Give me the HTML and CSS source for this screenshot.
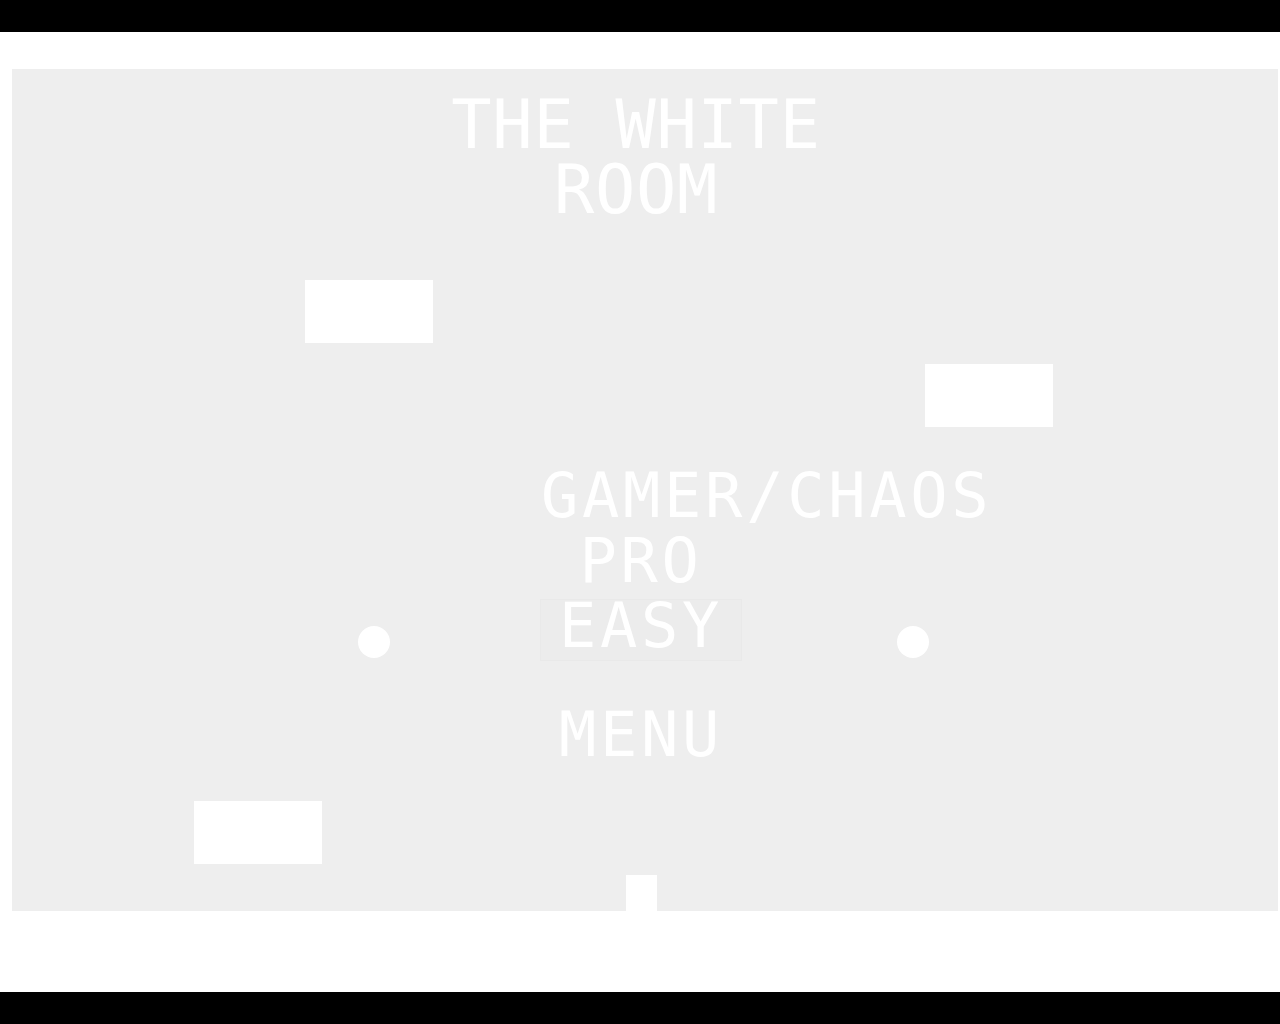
FILE: index.html
```html
<!DOCTYPE html>
<html lang="en">
<head>
    <meta charset="UTF-8">
    <meta name="viewport" content="width=device-width, initial-scale=1.0">
    <title>The White Room</title>
    <link rel="stylesheet" href="styles.css">
</head>
<body>
    <div class="bar"></div>

    <div class="screen">
        <div class="room">
            <h1 class="title">THE WHITE<br>ROOM</h1>

            <!-- Difficulty picker -->
            <div class="menu">
                <div class="item">GAMER/CHAOS</div>
                <div class="item">PRO</div>
                <div class="item selected">EASY</div>
                <div class="item back">MENU</div>
            </div>

            <!-- Floating blocks and orbs of the room -->
            <div class="block" style="left: 293px; top: 211px;"></div>
            <div class="block" style="left: 913px; top: 295px;"></div>
            <div class="block" style="left: 182px; top: 732px;"></div>
            <div class="orb" style="left: 346px; top: 557px;"></div>
            <div class="orb" style="left: 885px; top: 557px;"></div>
            <div class="player"></div>
        </div>
    </div>

    <div class="bar"></div>
</body>
</html>
```

FILE: styles.css
```css
* {
    margin: 0;
    padding: 0;
    box-sizing: border-box;
}

body {
    background-color: #fff;
    font-family: "DejaVu Sans Mono", "Liberation Mono", monospace;
    color: #fff;
}

.bar {
    height: 32px;
    background-color: #000;
}

.screen {
    height: 960px;
    padding: 37px 2px 0 12px;
    background-color: #fff;
}

.room {
    position: relative;
    width: 1266px;
    height: 842px;
    background-color: #eeeeee;
    overflow: hidden;
    padding-top: 24px;
}

.title {
    width: 400px;
    margin-left: 424px;
    font-size: 67px;
    font-weight: normal;
    line-height: 65px;
    letter-spacing: 0.7px;
    text-align: center;
}

.menu {
    width: 200px;
    margin: 247px 0 0 529px;
    display: flex;
    flex-direction: column;
    gap: 5px;
}

.item {
    height: 60px;
    padding-bottom: 8px;
    font-size: 62px;
    line-height: 52px;
    letter-spacing: 3.7px;
    text-align: center;
    white-space: nowrap;
}

.selected {
    background-color: #ececec;
    box-shadow: 0 0 0 1px #e9e9e9;
}

.back {
    margin-top: 44px;
}

.block {
    position: absolute;
    width: 128px;
    height: 63px;
    background-color: #fff;
}

.orb {
    position: absolute;
    width: 32px;
    height: 32px;
    border-radius: 50%;
    background-color: #fff;
}

.player {
    position: absolute;
    left: 614px;
    top: 806px;
    width: 31px;
    height: 40px;
    background-color: #fff;
}
```
